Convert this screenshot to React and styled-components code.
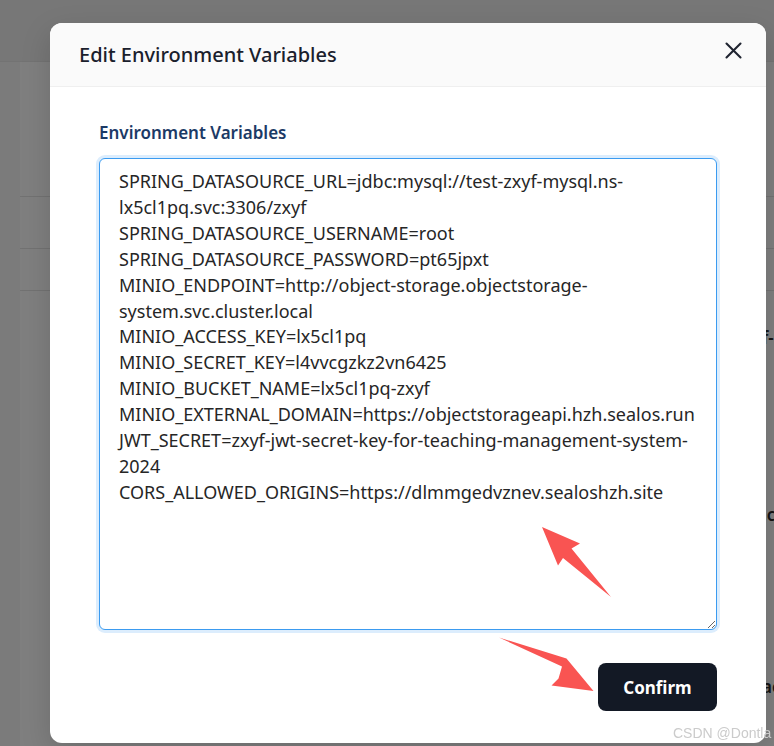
import React, { useEffect, useRef } from "react";
import styled, { createGlobalStyle } from "styled-components";

const ENV_TEXT = [
    "SPRING_DATASOURCE_URL=jdbc:mysql://test-zxyf-mysql.ns-lx5cl1pq.svc:3306/zxyf",
    "SPRING_DATASOURCE_USERNAME=root",
    "SPRING_DATASOURCE_PASSWORD=pt65jpxt",
    "MINIO_ENDPOINT=http://object-storage.objectstorage-system.svc.cluster.local",
    "MINIO_ACCESS_KEY=lx5cl1pq",
    "MINIO_SECRET_KEY=l4vvcgzkz2vn6425",
    "MINIO_BUCKET_NAME=lx5cl1pq-zxyf",
    "MINIO_EXTERNAL_DOMAIN=https://objectstorageapi.hzh.sealos.run",
    "JWT_SECRET=zxyf-jwt-secret-key-for-teaching-management-system-2024",
    "CORS_ALLOWED_ORIGINS=https://dlmmgedvznev.sealoshzh.site",
].join("\n")

// rows of the page behind the dialog, only a sliver of them shows on the right
const bgRows = [
    { h: 135, line: true },
    { h: 52, line: true },
    { h: 42, line: true },
    { h: 93, text: "f-mysql" },
    { h: 87 },
    { h: 86, text: ".com" },
    { h: 86 },
    { h: 86, text: "ac" },
    { h: 10 },
    { h: 28, text: "Dl", bold: true },
]

const App = () => {
    const areaRef = useRef()

    useEffect(() => {
        const el = areaRef.current
        if (!el) return
        el.focus()
        el.setSelectionRange(ENV_TEXT.length, ENV_TEXT.length)
    }, [])

    return (
        <Screen>
            <GlobalStyle />
            <BgPage>
                <BgTopBar />
                <BgBody>
                    <BgSide />
                    <BgMain>
                        {bgRows.map((r, i) => (
                            <BgRow key={i} $h={r.h} $line={r.line} $bold={r.bold}>
                                {r.text}
                            </BgRow>
                        ))}
                    </BgMain>
                </BgBody>
            </BgPage>

            <Overlay>
                <Dialog>
                    <Header>
                        <Title>Edit Environment Variables</Title>
                        <CloseButton aria-label="close">
                            <svg width="17" height="17" viewBox="0 0 17 17">
                                <path d="M1.5 1.5 L15.5 15.5 M15.5 1.5 L1.5 15.5" stroke="#1f2430" strokeWidth="2.1" strokeLinecap="round" />
                            </svg>
                        </CloseButton>
                    </Header>
                    <Body>
                        <Label>Environment Variables</Label>
                        <EnvArea ref={areaRef} defaultValue={ENV_TEXT} spellCheck={false} />
                    </Body>
                    <Footer>
                        <ConfirmButton>Confirm</ConfirmButton>
                    </Footer>
                </Dialog>
            </Overlay>

            <Arrows width="774" height="746" viewBox="0 0 774 746">
                <polygon points="542,527 580,543.5 571.5,548.5 611,597 563,558 558,565.5" />
                <polygon points="499,637.5 566.5,658.5 593.5,691 551.5,685.5 558.5,678.5 562,666.5" />
            </Arrows>

            <Watermark>CSDN @Dontla</Watermark>
        </Screen>
    )
}

export default App

const GlobalStyle = createGlobalStyle`
    html,
    body,
    #root {
        margin: 0;
        padding: 0;
        height: 100%;
    }
    body {
        overflow: hidden;
        font-family: "Noto Sans", "Open Sans", sans-serif;
    }
`

const Screen = styled.div`
    position: relative;
    width: 774px;
    height: 746px;
    overflow: hidden;
`

const BgPage = styled.div`
    width: 100%;
    height: 100%;
    display: grid;
    grid-template-rows: 62px 1fr;
    background: #ffffff;
`

const BgTopBar = styled.div`
    background: #efefef;
    border-bottom: 1px solid #e6e6e6;
`

const BgBody = styled.div`
    display: flex;
`

const BgSide = styled.div`
    width: 20px;
    background: #f6f6f6;
`

const BgMain = styled.div`
    flex: 1;
    display: flex;
    flex-flow: column;
`

const BgRow = styled.div`
    height: ${p => p.$h}px;
    flex-shrink: 0;
    box-sizing: border-box;
    border-bottom: ${p => (p.$line ? "1px solid #e4e4e4" : "none")};
    display: flex;
    align-items: center;
    padding-left: 742px;
    white-space: nowrap;
    font-family: "Noto Sans", sans-serif;
    font-size: 17px;
    font-weight: ${p => (p.$bold ? 700 : 600)};
    color: #2a2a2a;
`

const Overlay = styled.div`
    position: absolute;
    inset: 0;
    background: rgba(0, 0, 0, 0.5);
    padding: 23px 0 0 50px;
    box-sizing: border-box;
`

const Dialog = styled.div`
    width: 716px;
    height: 720px;
    background: #ffffff;
    border-radius: 12px;
    overflow: hidden;
    display: flex;
    flex-flow: column;
    box-shadow: 0 10px 30px rgba(0, 0, 0, 0.15);
`

const Header = styled.div`
    height: 64px;
    box-sizing: border-box;
    background: #fafafa;
    border-bottom: 1px solid #efefef;
    display: flex;
    justify-content: space-between;
    align-items: flex-start;
    padding: 18px 24px 0 29px;
`

const Title = styled.h2`
    margin: 0;
    font-family: "Noto Sans", "Open Sans", sans-serif;
    font-size: 20px;
    line-height: 28px;
    font-weight: 500;
    color: #1a202c;
`

const CloseButton = styled.button`
    margin-top: 1px;
    padding: 0;
    border: 0;
    background: none;
    width: 17px;
    height: 17px;
    display: flex;
    cursor: pointer;
`

const Body = styled.div`
    flex: 1;
    display: flex;
    flex-flow: column;
    padding: 34px 49px 0 49px;
`

const Label = styled.label`
    font-family: "Noto Sans", "Open Sans", sans-serif;
    font-size: 17px;
    line-height: 24px;
    font-weight: 600;
    color: #1c3a66;
    margin-bottom: 13px;
`

const EnvArea = styled.textarea`
    height: 472px;
    box-sizing: border-box;
    padding: 10px 14px 10px 19px;
    border: 1px solid #3b9bf0;
    border-radius: 6px;
    box-shadow: 0 0 0 3px #dcedfd;
    outline: none;
    resize: both;
    font-family: "Noto Sans", "Open Sans", sans-serif;
    font-size: 18px;
    line-height: 25.9px;
    color: #262626;
    caret-color: #111;
    background: #fff;

    &:focus {
        border-color: #3b9bf0;
        box-shadow: 0 0 0 3px #dcedfd;
    }
`

const Footer = styled.div`
    display: flex;
    justify-content: flex-end;
    padding: 32px 49px 32px 0;
`

const ConfirmButton = styled.button`
    width: 119px;
    height: 48px;
    border: 0;
    border-radius: 8px;
    background: #131925;
    color: #ffffff;
    font-family: "Noto Sans", "Open Sans", sans-serif;
    font-size: 17px;
    font-weight: 700;
    cursor: pointer;
`

const Arrows = styled.svg`
    position: absolute;
    left: 0;
    top: 0;
    pointer-events: none;

    polygon {
        fill: #f95452;
    }
`

const Watermark = styled.div`
    position: absolute;
    left: 673px;
    top: 724px;
    font-family: "Liberation Sans", sans-serif;
    font-size: 14px;
    line-height: 18px;
    color: #cbcbcb;
    white-space: nowrap;
    pointer-events: none;
`
